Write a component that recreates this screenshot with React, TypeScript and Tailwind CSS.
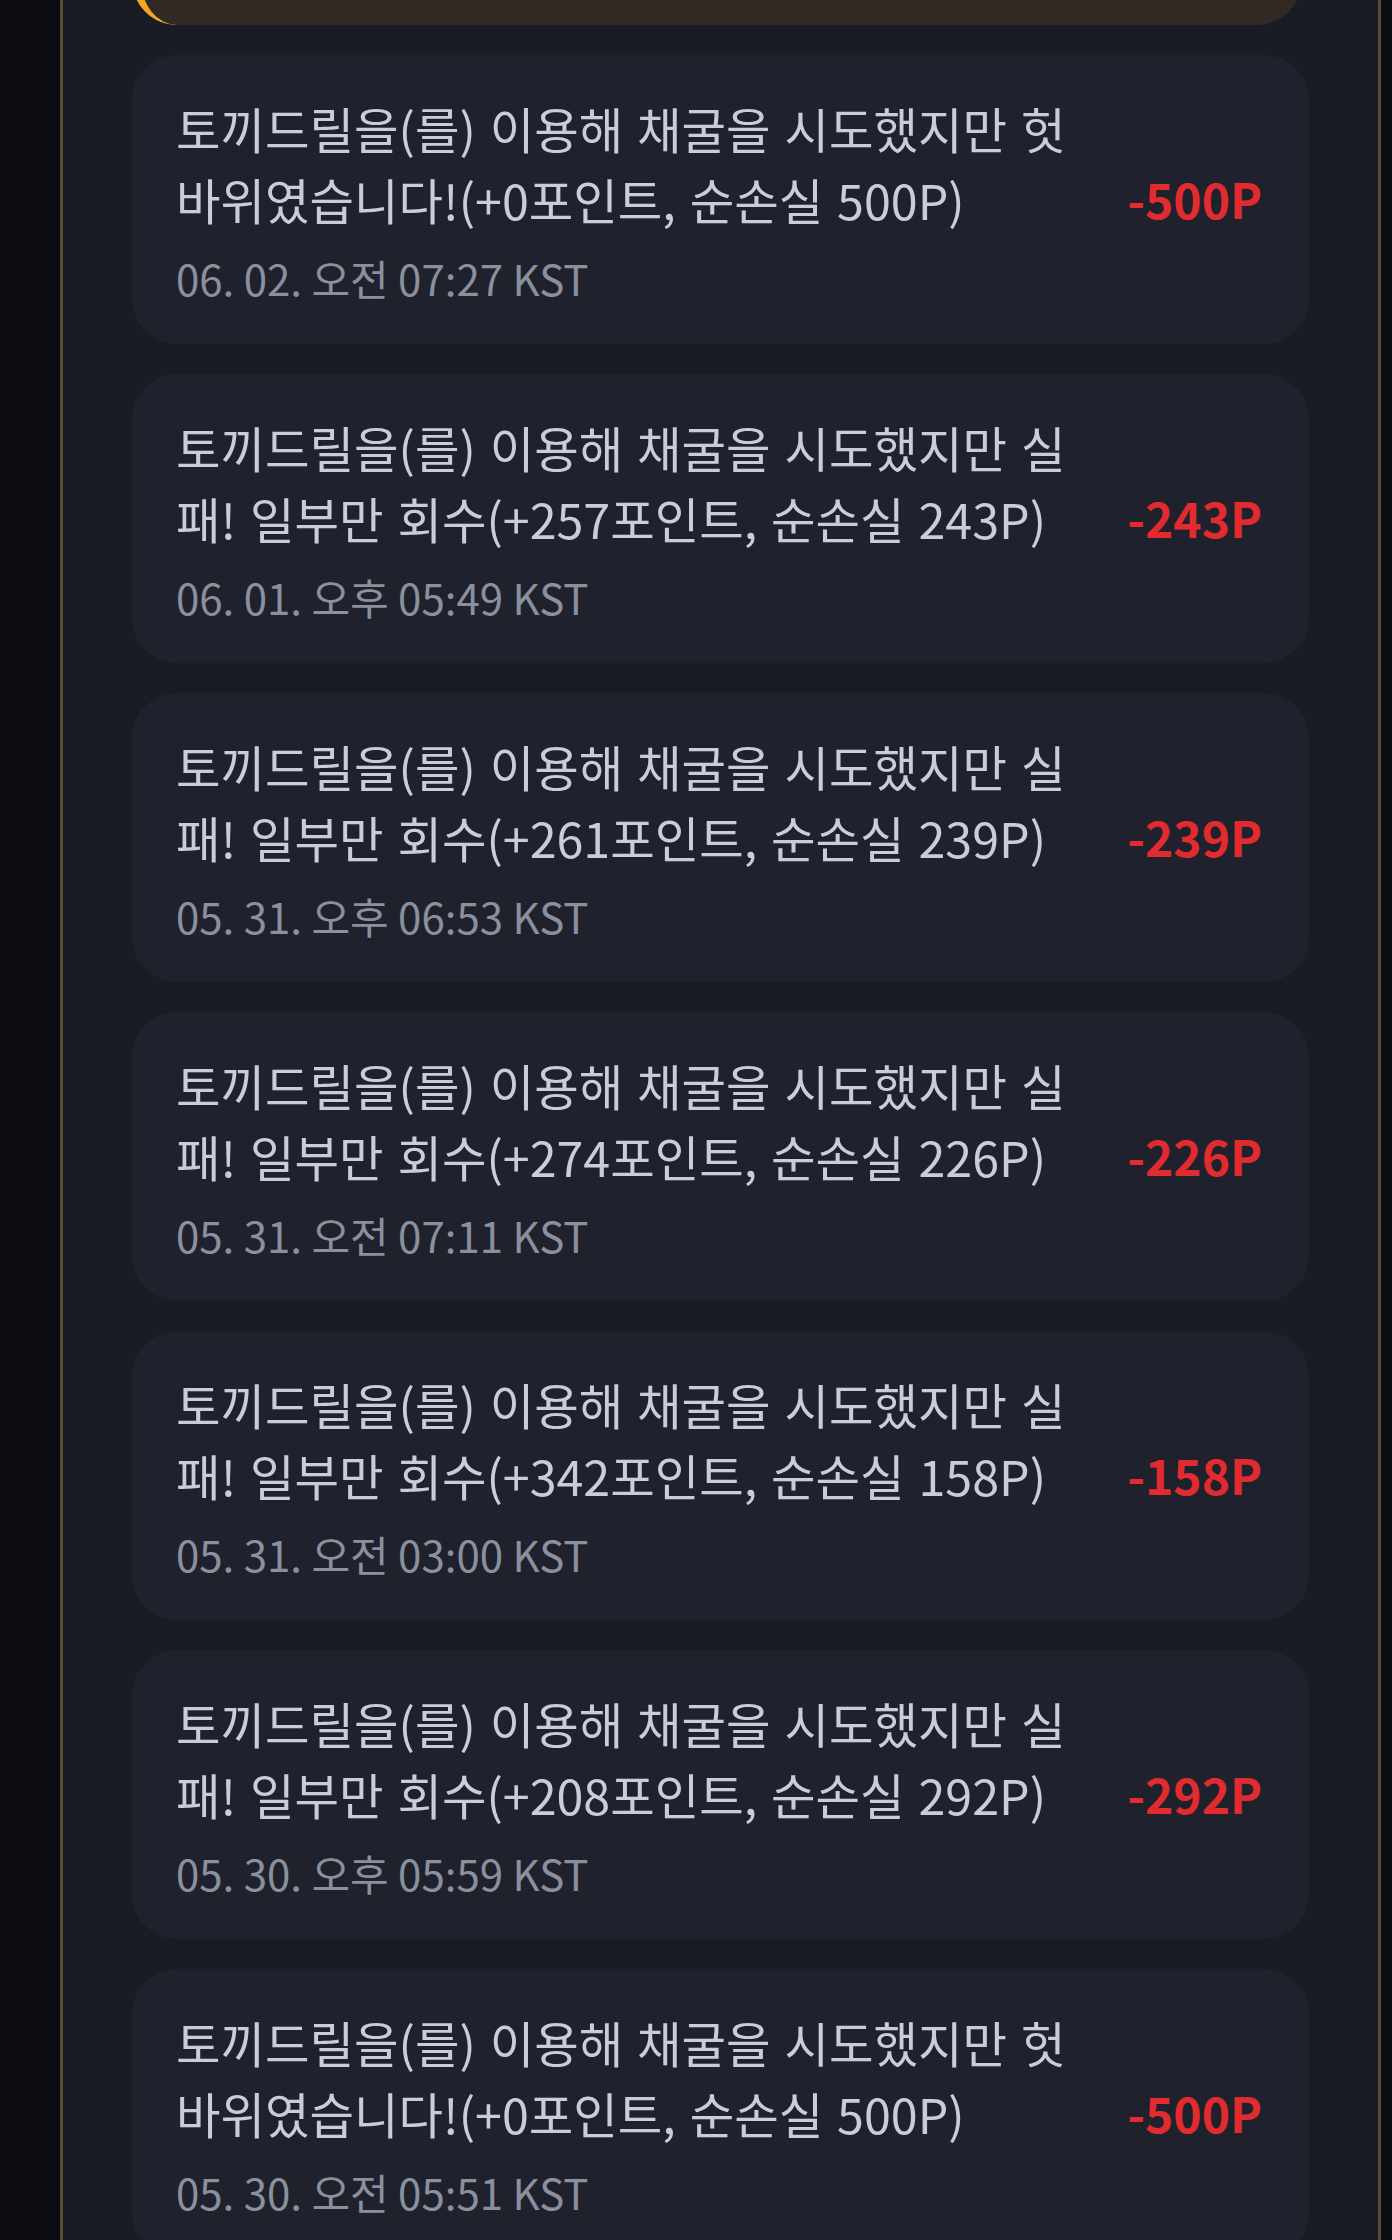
import React from "react";

type Item = { text: string; date: string; amount: string };

const items: Item[] = [
  { text: "토끼드릴을(를) 이용해 채굴을 시도했지만 헛바위였습니다!(+0포인트, 순손실 500P)", date: "06. 02. 오전 07:27 KST", amount: "-500P" },
  { text: "토끼드릴을(를) 이용해 채굴을 시도했지만 실패! 일부만 회수(+257포인트, 순손실 243P)", date: "06. 01. 오후 05:49 KST", amount: "-243P" },
  { text: "토끼드릴을(를) 이용해 채굴을 시도했지만 실패! 일부만 회수(+261포인트, 순손실 239P)", date: "05. 31. 오후 06:53 KST", amount: "-239P" },
  { text: "토끼드릴을(를) 이용해 채굴을 시도했지만 실패! 일부만 회수(+274포인트, 순손실 226P)", date: "05. 31. 오전 07:11 KST", amount: "-226P" },
  { text: "토끼드릴을(를) 이용해 채굴을 시도했지만 실패! 일부만 회수(+342포인트, 순손실 158P)", date: "05. 31. 오전 03:00 KST", amount: "-158P" },
  { text: "토끼드릴을(를) 이용해 채굴을 시도했지만 실패! 일부만 회수(+208포인트, 순손실 292P)", date: "05. 30. 오후 05:59 KST", amount: "-292P" },
  { text: "토끼드릴을(를) 이용해 채굴을 시도했지만 헛바위였습니다!(+0포인트, 순손실 500P)", date: "05. 30. 오전 05:51 KST", amount: "-500P" },
];

export default function App() {
  return (
    <div
      className="w-[1392px] h-[2240px] overflow-hidden bg-[#0c0d10] pl-[60px] pr-[11px] flex"
      style={{ fontFamily: '"Noto Sans CJK KR", "Noto Sans", sans-serif' }}
    >
      <div className="flex-1 border-x-[3px] border-[#5b4b30] bg-[#191c24] px-[69px] flex flex-col gap-[30px]">
        <div className="h-[25px] overflow-hidden flex flex-col justify-end shrink-0">
          <div className="h-[140px] shrink-0 rounded-[45px] border-l-[9px] border-[#f5a524] bg-[#312923] mr-[7px]" />
        </div>
        {items.map((it, i) => (
          <div
            key={i}
            className="shrink-0 h-[289px] rounded-[45px] bg-[#1f222d] pl-[44px] pr-[47px] pt-[38px] pb-[38px] flex items-center"
          >
            <div className="w-[915px] shrink-0 self-start">
              <div className="text-[48.4px] leading-[71px] text-[#c9cdd8] [word-spacing:3px]">{it.text}</div>
              <div className="mt-[14px] text-[42px] leading-[57px] text-[#8a909d]">{it.date}</div>
            </div>
            <div className="flex-1 text-right text-[48px] font-bold text-[#e12b2f] leading-none mb-[4px]">
              {it.amount}
            </div>
          </div>
        ))}
      </div>
    </div>
  );
}
